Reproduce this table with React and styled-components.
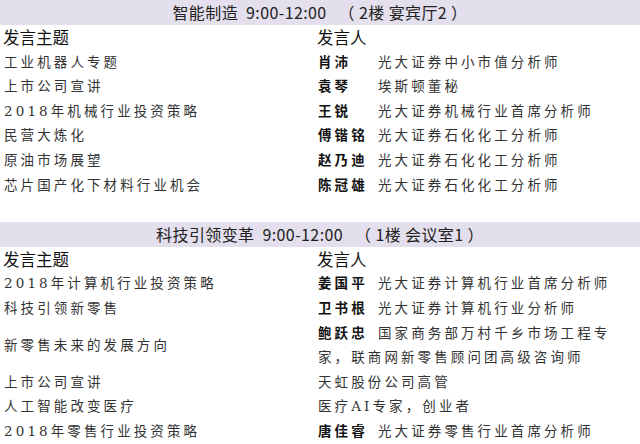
import React from 'react'
import styled, { createGlobalStyle } from 'styled-components'

const GlobalStyle = createGlobalStyle`
    body {
        margin: 0;
        background: #fff;
    }
`

const sessions = [
    {
        title: '智能制造  9:00-12:00   （ 2楼 宴宾厅2 ）',
        talks: [
            { topic: '工业机器人专题', name: '肖沛', role: ['光大证券中小市值分析师'] },
            { topic: '上市公司宣讲', name: '袁琴', role: ['埃斯顿董秘'] },
            { topic: '2018年机械行业投资策略', name: '王锐', role: ['光大证券机械行业首席分析师'] },
            { topic: '民营大炼化', name: '傅锴铭', role: ['光大证券石化化工分析师'] },
            { topic: '原油市场展望', name: '赵乃迪', role: ['光大证券石化化工分析师'] },
            { topic: '芯片国产化下材料行业机会', name: '陈冠雄', role: ['光大证券石化化工分析师'] },
        ],
    },
    {
        title: '科技引领变革  9:00-12:00   （ 1楼 会议室1 ）',
        talks: [
            { topic: '2018年计算机行业投资策略', name: '姜国平', role: ['光大证券计算机行业首席分析师'] },
            { topic: '科技引领新零售', name: '卫书根', role: ['光大证券计算机行业分析师'] },
            { topic: '新零售未来的发展方向', name: '鲍跃忠', role: ['国家商务部万村千乡市场工程专', '家，联商网新零售顾问团高级咨询师'] },
            { topic: '上市公司宣讲', role: ['天虹股份公司高管'] },
            { topic: '人工智能改变医疗', role: ['医疗AI专家，创业者'] },
            { topic: '2018年零售行业投资策略', name: '唐佳睿', role: ['光大证券零售行业首席分析师'] },
        ],
    },
]

function App() {
    return (
        <Page>
            <GlobalStyle />
            {sessions.map((s, i) => (
                <Session key={i} $gap={i > 0}>
                    <SessionTitle>{s.title}</SessionTitle>
                    <Row>
                        <HeadCell>发言主题</HeadCell>
                        <HeadCell>发言人</HeadCell>
                    </Row>
                    {s.talks.map((t, j) => (
                        <Row key={j} $lines={t.role.length}>
                            <Topic>{t.topic}</Topic>
                            <Speaker>
                                {t.role.map((line, k) => (
                                    <SpeakerLine key={k}>
                                        {k === 0 && t.name && <Name>{t.name}</Name>}
                                        <span>{line}</span>
                                    </SpeakerLine>
                                ))}
                            </Speaker>
                        </Row>
                    ))}
                </Session>
            ))}
        </Page>
    )
}

export default App;

const ROW = 24.6

const Page = styled.div`
    width: 640px;
    height: 444px;
    overflow: hidden;
    background: #fff;
`
const Session = styled.section`
    margin-top: ${p => p.$gap ? `${ROW}px` : 0};
`
const SessionTitle = styled.div`
    height: 25px;
    line-height: 25px;
    background: #e4dfec;
    color: #222;
    text-align: center;
    white-space: pre;
    font-family: "Noto Sans CJK SC", "Noto Sans", sans-serif;
    font-size: 16px;
    letter-spacing: 0.4px;
`
const Row = styled.div`
    display: grid;
    grid-template-columns: 314px 1fr;
    padding: 0 20px 0 4px;
    min-height: ${p => (p.$lines || 1) * ROW}px;
    line-height: ${ROW}px;
`
const HeadCell = styled.div`
    margin-left: -1px;
    font-family: "Noto Sans CJK SC", "Noto Sans", sans-serif;
    font-size: 16.5px;
    color: #111;
`
const Topic = styled.div`
    display: flex;
    align-items: center;
    font-family: "DejaVu Serif", "Noto Sans CJK SC", serif;
    font-size: 13.5px;
    letter-spacing: 3.1px;
    color: #333;
`
const Speaker = styled.div`
    font-family: "DejaVu Serif", "Noto Sans CJK SC", serif;
    font-size: 13.5px;
    letter-spacing: 3.1px;
    color: #333;
`
const SpeakerLine = styled.div`
    display: flex;
    white-space: nowrap;
`
const Name = styled.span`
    min-width: 52px;
    margin-right: 8px;
    font-weight: bold;
    color: #111;
`
